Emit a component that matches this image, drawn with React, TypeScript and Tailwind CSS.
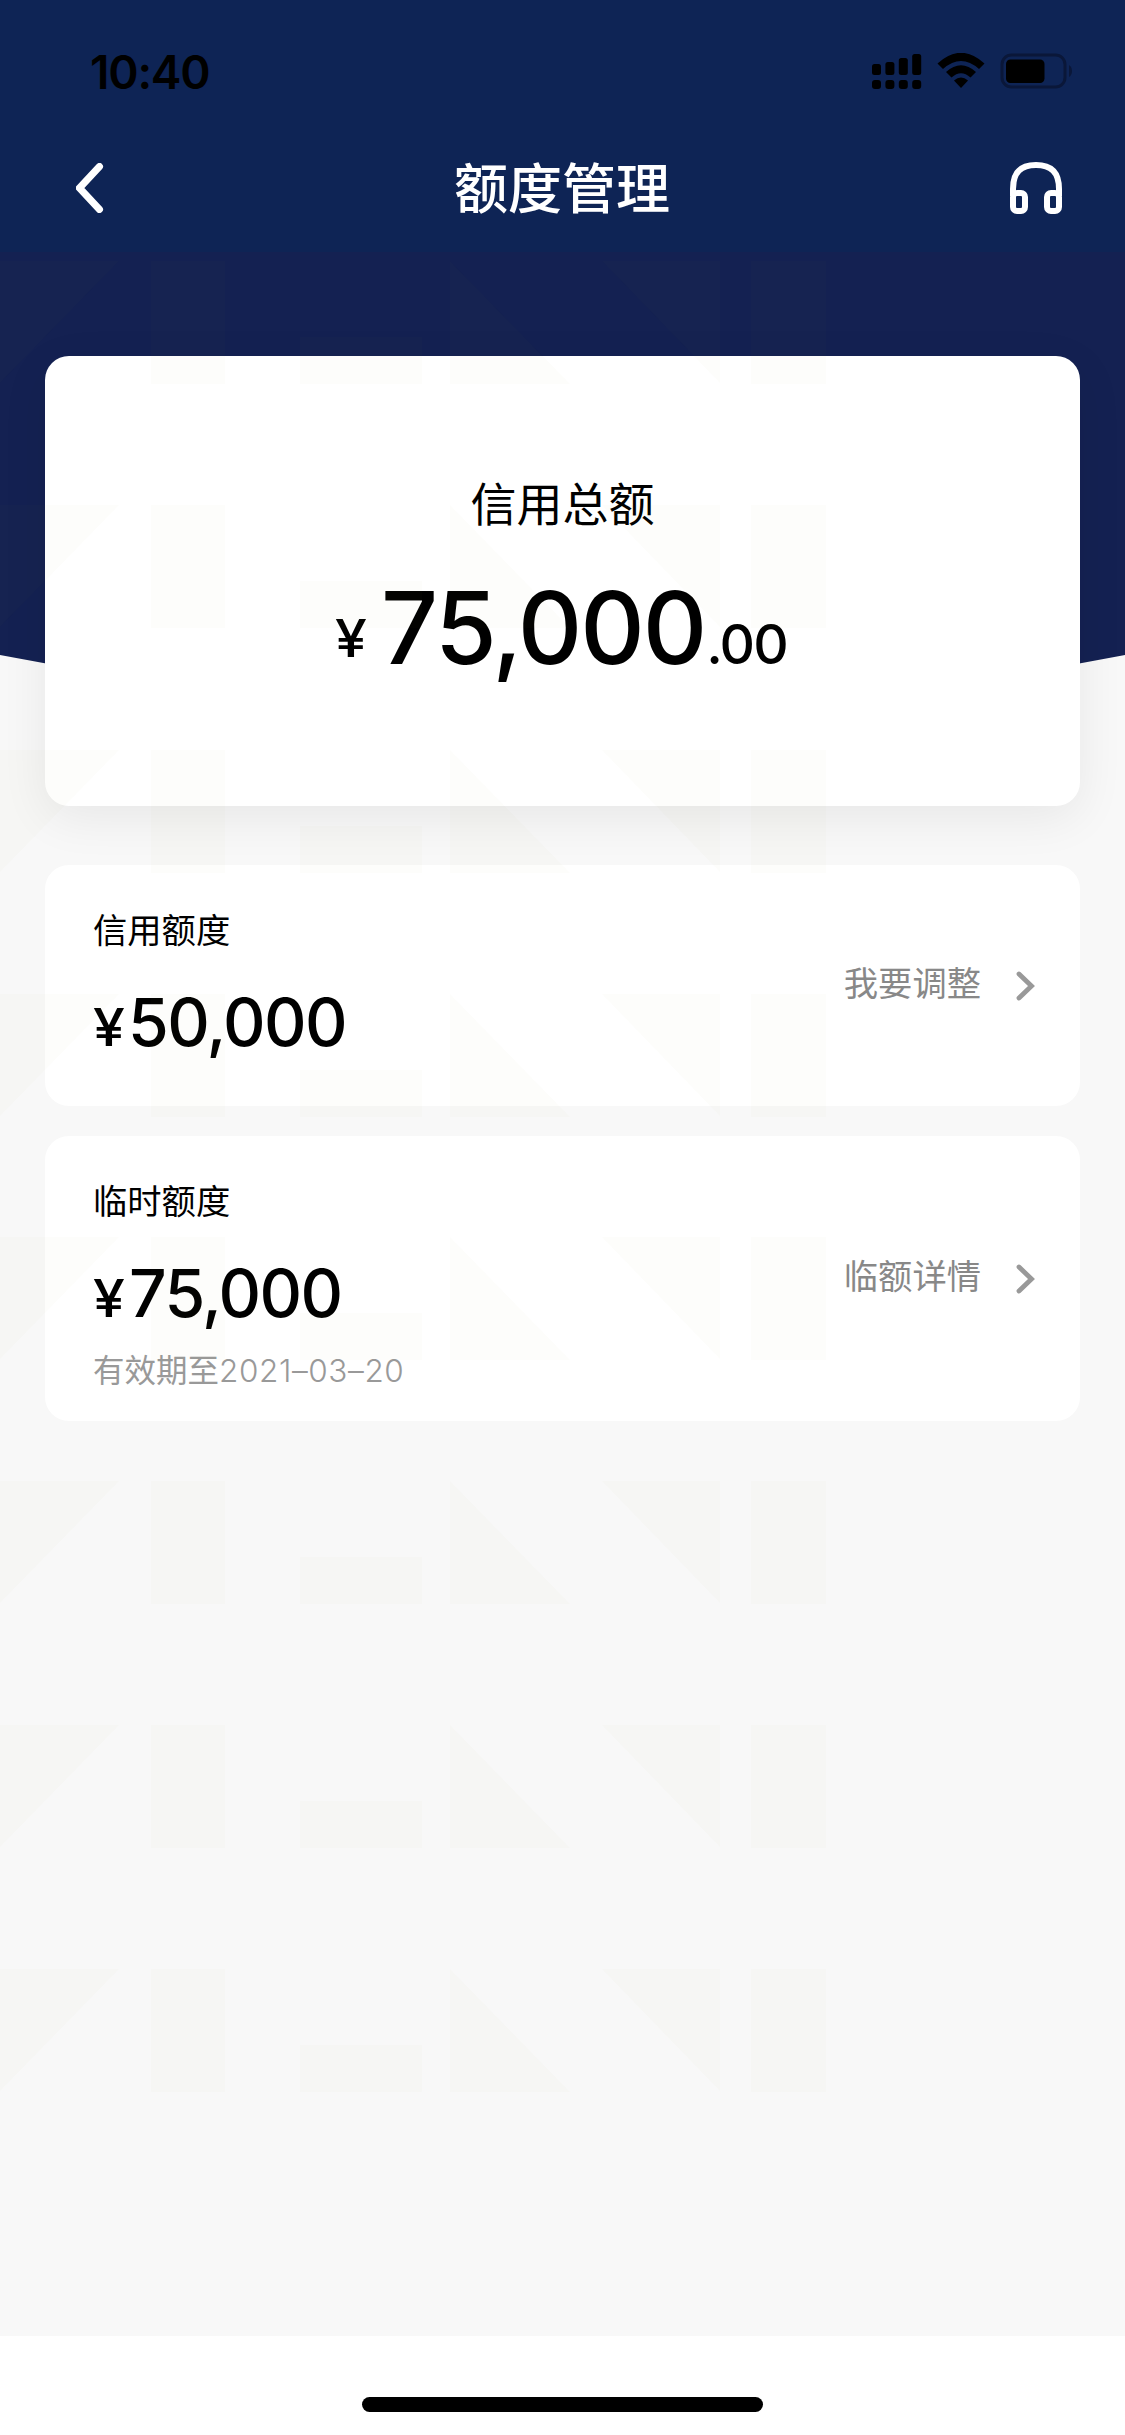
import React from "react";

const CJK = "font-['Inter','Noto_Sans_CJK_SC',sans-serif]";

function Chevron() {
  return (
    <svg className="mt-[1px]" width="20" height="32" viewBox="0 0 20 32" fill="none" stroke="#999" strokeWidth="4.8" strokeLinecap="round">
      <path d="M3 4L15.500 16L3 28" />
    </svg>
  );
}

function StatusBar() {
  const bars = [11, 13, 17, 21];
  return (
    <div className="flex h-[140px] items-start justify-between pl-[90px] pr-[51px]">
      <span className="mt-[45px] text-[46px] font-semibold leading-[54px] tracking-[-1.2px] text-black">10:40</span>
      <div className="mt-[53px] flex items-start">
        <svg width="50" height="37" viewBox="0 0 50 37">
          {bars.map((h, i) => (
            <g key={h}>
              <rect x={i * 13.4} y={22 - h} width="9" height={h} rx="2.5" />
              <rect x={i * 13.4} y="27" width="9" height="9" rx="3" />
            </g>
          ))}
        </svg>
        <svg className="ml-[15px]" width="48" height="36" viewBox="0 0 48 36">
          <path d="M0.5 10.5Q24 -11 47.500 10.500L42 16Q24 0 6 16Z" />
          <path d="M9 19Q24 5.500 39 19L33.500 24.500Q24 16 14.500 24.500Z" />
          <path d="M17 27.500Q24 21.500 31 27.500L24 35Z" />
        </svg>
        <svg className="ml-[15px]" width="74" height="36" viewBox="0 0 74 36">
          <rect x="2" y="2" width="63" height="32" rx="9.500" fill="none" stroke="#0a1739" strokeWidth="3" />
          <rect x="6" y="6.500" width="38.500" height="23.500" rx="4.500" />
          <path d="M69 12Q72 14 72 18T69 24Z" fill="#0a1739" />
        </svg>
      </div>
    </div>
  );
}

function Watermark() {
  return (
    <svg className="pointer-events-none absolute left-0 top-0" width="1125" height="2435" fill="#84883c" fillOpacity="0.02">
      {[261, 505, 750, 994, 1237, 1481, 1725, 1969].map((y) => (
        <path
          key={y}
          transform={`translate(0 ${y})`}
          d="M0 0H119L0 122ZM151 0H225V123H151ZM300 76H422V123H300ZM450 0L570 123H450ZM602 0H720V122ZM751 0H826V123H751Z"
        />
      ))}
    </svg>
  );
}

function LimitCard({ title, amount, action, note }: { title: string; amount: string; action: string; note?: string }) {
  return (
    <section className={`flex items-center justify-between rounded-[24px] bg-white pl-[48px] pr-[44px] ${note ? "mt-[30px] h-[285px]" : "mt-[59px] h-[241px]"}`}>
      <div className="h-full pt-[43px]">
        <div className="text-[34.300px] leading-[46px] text-black">{title}</div>
        <div className="mt-[33px] flex items-baseline leading-[70px] text-black">
          <span className={`origin-left scale-x-110 text-[52px] font-medium leading-[60px] ${note ? "mr-[7px]" : "mr-[6px]"}`}>¥</span>
          <span className="text-[66px] font-medium tracking-[-1.600px]">{amount}</span>
        </div>
        {note && (
          <div className="mt-[22px] text-[31.500px] leading-[40px] text-[#999]">
            <span>有效期至</span>
            <span className="font-light tracking-[0.6px]">2021–03–20</span>
          </div>
        )}
      </div>
      <div className="flex items-center gap-[33px]">
        <span className="mb-[3px] mr-[2px] text-[34.300px] leading-[46px] text-[#888]">{action}</span>
        <Chevron />
      </div>
    </section>
  );
}

export default function App() {
  return (
    <div className={`relative flex h-[2435px] w-[1125px] flex-col overflow-hidden bg-[#f8f8f8] ${CJK}`}>
      <svg className="absolute left-0 top-0" width="1125" height="740">
        <path d="M0 0H1125V655Q562 765 0 655Z" fill="#142152" />
      </svg>
      <header className="relative h-[252px] bg-[#0e2455]">
        <StatusBar />
        <div className="flex h-[96px] items-center justify-between pl-[76px] pr-[62px] text-white">
          <svg width="32" height="50" viewBox="0 0 32 50" fill="none" stroke="#fff" strokeWidth="7" strokeLinecap="round">
            <path d="M23.500 3.500L3.500 25L23.500 46.500" />
          </svg>
          <h1 className="pl-[7px] pt-[3px] text-[54px] font-medium leading-[72px]">额度管理</h1>
          <svg width="54" height="54" viewBox="0 0 54 54" fill="none" stroke="#fff" strokeWidth="6">
            <path d="M4 35V28C4 11 12 4 27 4S50 11 50 28V35" />
            <rect x="4" y="32" width="12" height="18" rx="4" />
            <rect x="38" y="32" width="12" height="18" rx="4" />
          </svg>
        </div>
      </header>
      <main className="relative flex-1 px-[45px] pt-[104px]">
        <section className="flex h-[450px] flex-col items-center rounded-[24px] bg-white pt-[117px] shadow-[0_12px_48px_rgba(0,0,0,0.07)]">
          <h2 className="text-[46px] leading-[62px] text-black">信用总额</h2>
          <div className="mt-[38px] flex items-baseline leading-[110px] text-black">
            <span className="relative bottom-[7px] mr-[14px] origin-right scale-x-110 text-[52px] font-medium leading-[60px]">¥</span>
            <span className="text-[100px] font-medium tracking-[-2.100px]">75,000</span>
            <span className="ml-[1px] text-[55px] font-medium tracking-[-1.800px]">.00</span>
          </div>
        </section>
        <LimitCard title="信用额度" amount="50,000" action="我要调整" />
        <LimitCard title="临时额度" amount="75,000" action="临额详情" note="有效期至2021–03–20" />
      </main>
      <Watermark />
      <footer className="relative flex h-[99px] justify-center bg-white pt-[61px]">
        <div className="h-[15px] w-[401px] rounded-full bg-black" />
      </footer>
    </div>
  );
}
